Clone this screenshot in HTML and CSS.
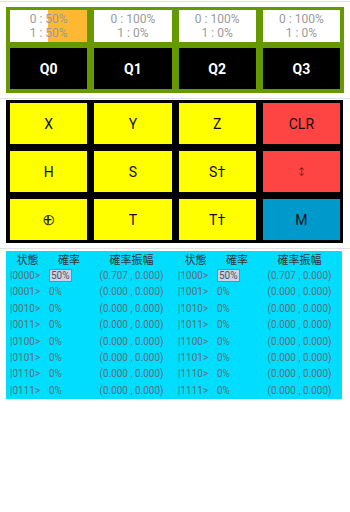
FILE: index.html
```html
<!DOCTYPE html>
<html lang="ja">
<head>
    <meta charset="UTF-8">
    <title>Qubits</title>
    <link rel="stylesheet" href="styles.css">
</head>
<body>
<div class="rule first"></div>

<div id="qubits">
    <div class="prob" style="--p1: 50%">0 : 50%<br>1 : 50%</div>
    <div class="prob" style="--p1: 0%">0 : 100%<br>1 : 0%</div>
    <div class="prob" style="--p1: 0%">0 : 100%<br>1 : 0%</div>
    <div class="prob" style="--p1: 0%">0 : 100%<br>1 : 0%</div>
    <div class="qbit">Q0</div>
    <div class="qbit">Q1</div>
    <div class="qbit">Q2</div>
    <div class="qbit">Q3</div>
</div>

<div class="rule"></div>

<div id="gates">
    <div class="gate">X</div>
    <div class="gate">Y</div>
    <div class="gate">Z</div>
    <div class="gate red">CLR</div>
    <div class="gate">H</div>
    <div class="gate">S</div>
    <div class="gate">S†</div>
    <div class="gate red"><span class="swap">↕</span></div>
    <div class="gate"><span class="cnot">⊕</span></div>
    <div class="gate">T</div>
    <div class="gate">T†</div>
    <div class="gate blue">M</div>
</div>

<div class="rule"></div>

<div id="states">
    <div class="half">
        <div class="hd">状態</div><div class="hd">確率</div><div class="hd">確率振幅</div>
        <div class="st">|0000&gt;</div><div class="pr"><span class="sel">50%</span></div><div class="amp">(0.707 , 0.000)</div>
        <div class="st">|0001&gt;</div><div class="pr">0%</div><div class="amp">(0.000 , 0.000)</div>
        <div class="st">|0010&gt;</div><div class="pr">0%</div><div class="amp">(0.000 , 0.000)</div>
        <div class="st">|0011&gt;</div><div class="pr">0%</div><div class="amp">(0.000 , 0.000)</div>
        <div class="st">|0100&gt;</div><div class="pr">0%</div><div class="amp">(0.000 , 0.000)</div>
        <div class="st">|0101&gt;</div><div class="pr">0%</div><div class="amp">(0.000 , 0.000)</div>
        <div class="st">|0110&gt;</div><div class="pr">0%</div><div class="amp">(0.000 , 0.000)</div>
        <div class="st">|0111&gt;</div><div class="pr">0%</div><div class="amp">(0.000 , 0.000)</div>
    </div>
    <div class="half">
        <div class="hd">状態</div><div class="hd">確率</div><div class="hd">確率振幅</div>
        <div class="st">|1000&gt;</div><div class="pr"><span class="sel">50%</span></div><div class="amp">(0.707 , 0.000)</div>
        <div class="st">|1001&gt;</div><div class="pr">0%</div><div class="amp">(0.000 , 0.000)</div>
        <div class="st">|1010&gt;</div><div class="pr">0%</div><div class="amp">(0.000 , 0.000)</div>
        <div class="st">|1011&gt;</div><div class="pr">0%</div><div class="amp">(0.000 , 0.000)</div>
        <div class="st">|1100&gt;</div><div class="pr">0%</div><div class="amp">(0.000 , 0.000)</div>
        <div class="st">|1101&gt;</div><div class="pr">0%</div><div class="amp">(0.000 , 0.000)</div>
        <div class="st">|1110&gt;</div><div class="pr">0%</div><div class="amp">(0.000 , 0.000)</div>
        <div class="st">|1111&gt;</div><div class="pr">0%</div><div class="amp">(0.000 , 0.000)</div>
    </div>
</div>
</body>
</html>
```

FILE: styles.css
```css
body {
    margin: 0;
    background: #fff;
    font-family: Roboto, "Noto Sans CJK JP", sans-serif;
}

.rule {
    height: 1px;
    background: #e2e2e2;
    margin: 5px 0 0 0;
}

.rule.first {
    margin-top: 1px;
}

/* qubit panel */
#qubits {
    margin: 5px 6px 0 6px;
    background: #669900;
    padding: 3px 4px 4px 4px;
    display: grid;
    grid-template-columns: repeat(4, 1fr);
    grid-template-rows: 32px 41px;
    gap: 6px 7px;
}

.prob {
    background: linear-gradient(to right, #fff calc(100% - var(--p1)), #ffb833 calc(100% - var(--p1)));
    color: #9a9a9a;
    font-size: 12px;
    line-height: 14px;
    text-align: center;
    padding-top: 2px;
}

.qbit {
    background: #000;
    color: #fff;
    font-weight: bold;
    font-size: 14px;
    display: flex;
    justify-content: center;
    align-items: center;
}

/* gate panel */
#gates {
    margin: 1px 7px 0 6px;
    background: #000;
    padding: 3px 3px 3px 4px;
    display: grid;
    grid-template-columns: repeat(4, 1fr);
    grid-template-rows: repeat(3, 41px);
    gap: 7px 7px;
}

.gate {
    background: #ffff00;
    color: #111;
    font-size: 14px;
    display: flex;
    justify-content: center;
    align-items: center;
}

.gate.red {
    background: #ff4444;
}

.gate.blue {
    background: #0099cc;
}

.swap {
    font-size: 10px;
    color: #6a1a1a;
}

.cnot {
    font-family: "DejaVu Sans", sans-serif;
    font-size: 17px;
    font-weight: 300;
}

/* state table */
#states {
    margin: 2px 8px 0 6px;
    background: #00ddff;
    display: flex;
}

.half {
    flex: 1;
    display: grid;
    grid-template-columns: 43px 40px 1fr;
    grid-auto-rows: 16.4px;
    align-items: center;
    font-size: 10px;
    color: #5f6f75;
}

.hd {
    text-align: center;
    color: #333;
    font-size: 11px;
}

.st {
    padding-left: 4px;
}

.amp {
    text-align: center;
}

.sel {
    background: #c9d3ea;
    border: 1px solid #7a7ae0;
    padding: 0 1px;
    color: #555;
}
```
